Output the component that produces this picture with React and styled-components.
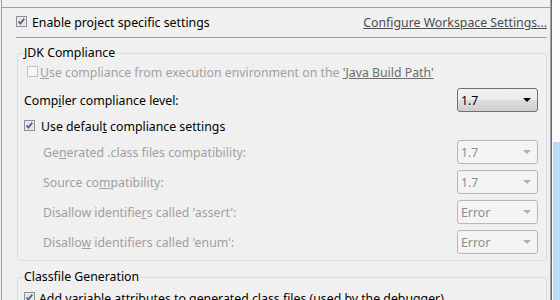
import styled, { createGlobalStyle } from "styled-components";

const GlobalStyle = createGlobalStyle`
  html, body {
    margin: 0;
    background: #f0f0f0;
  }
  body {
    font-family: "Noto Sans", "Open Sans", sans-serif;
    font-size: 12.3px;
    color: #000;
  }
`;

const Window = styled.div`
  display: flex;
  width: 560px;
  height: 300px;
  overflow: hidden;
`;

// plain block so nothing gets squeezed by the 300px height
const Pane = styled.div`
  box-sizing: border-box;
  width: 550px;
  flex: none;
  margin-left: 1px;
  border-left: 1px solid #a0a0a0;
  border-right: 1px solid #a0a0a0;
  overflow: hidden;
`;

const TopRule = styled.div`
  margin: 7px 0 0 -2px;
  height: 1px;
  background: #a0a0a0;
`;

const Header = styled.div`
  display: flex;
  align-items: center;
  justify-content: space-between;
  height: 29px;
  padding: 0 3px 0 14px;
`;

const Divider = styled.div`
  height: 1px;
  background: #a0a0a0;
  margin: 0 3px 0 14px;
`;

const Check = styled.label`
  display: flex;
  align-items: center;
  gap: ${({ gap }) => gap || 4}px;
  white-space: nowrap;
  color: ${({ disabled }) => (disabled ? "#a0a0a0" : "#000")};

  svg {
    flex: none;
    margin-top: -2px;
  }
`;

const Link = styled.a`
  color: ${({ disabled }) => (disabled ? "#6d6d6d" : "#4d4d4d")};
  text-decoration: underline;
  cursor: pointer;
`;

const Group = styled.fieldset`
  margin: ${({ top }) => top}px 3px 0 15px;
  padding: 0 8px 6px 0;
  border: 1px solid #d5dfe5;
  border-radius: 3px;
  min-width: 0;
`;

const Legend = styled.legend`
  margin-left: 5px;
  padding: 0 1px;
  line-height: 16px;
  color: #000;
`;

const Row = styled.div`
  display: flex;
  align-items: center;
  justify-content: space-between;
  height: ${({ h }) => h}px;
  margin-top: ${({ mt }) => mt || 0}px;
  padding-left: ${({ indent }) => indent}px;
`;

const Label = styled.span`
  white-space: nowrap;
  color: ${({ disabled }) => (disabled ? "#a0a0a0" : "#000")};
`;

const Combo = styled.div`
  box-sizing: border-box;
  width: 81px;
  height: 24px;
  flex: none;
  display: flex;
  align-items: center;
  justify-content: space-between;
  padding: 0 6px 0 3px;
  border-radius: 3px;
  border: 1px solid ${({ disabled }) => (disabled ? "#b8b8b8" : "#707070")};
  background: ${({ disabled }) =>
    disabled
      ? "#f4f4f4"
      : "linear-gradient(#f2f2f2 0%, #ebebeb 50%, #dddddd 50%, #cfcfcf 100%)"};
  color: ${({ disabled }) => (disabled ? "#8d8d8d" : "#000")};
`;

const Arrow = styled.span`
  width: 0;
  height: 0;
  border-left: 4px solid transparent;
  border-right: 4px solid transparent;
  border-top: 4px solid ${({ disabled }) => (disabled ? "#b0b0b0" : "#000")};
`;

const ScrollTrack = styled.div`
  flex: 1;
  display: flex;
  flex-direction: column;
  background: #fcfcfc;
  border-left: 1px solid #6a6a6a;
`;

const ScrollThumb = styled.div`
  margin: 142px 0 0 1px;
  flex: 1;
  background: #bcd9f5;
`;

const Box = ({ checked, disabled }) => (
  <svg width="11" height="11" viewBox="0 0 11 11">
    <rect
      x="0.5"
      y="0.5"
      width="10"
      height="10"
      fill={disabled ? "#f7f7f7" : "#f2f2f2"}
      stroke={disabled ? "#c4c4c4" : "#8e8f8f"}
    />
    {!disabled && <rect x="1.5" y="1.5" width="8" height="8" fill="#e4e4e4" />}
    {checked && (
      <path
        d="M2.5 5.5 L4.3 7.6 L8.3 2.6"
        stroke="#4a5f97"
        strokeWidth="1.7"
        fill="none"
      />
    )}
  </svg>
);

const settings = [
  { label: <>Ge<u>n</u>erated .class files compatibility:</>, value: "1.7" },
  { label: <>Source co<u>m</u>patibility:</>, value: "1.7" },
  { label: <>Disallow identifie<u>r</u>s called 'assert':</>, value: "Error" },
  { label: <>Disallo<u>w</u> identifiers called 'enum':</>, value: "Error" },
];

export default function App() {
  return (
    <>
      <GlobalStyle />
      <Window>
        <Pane>
          <TopRule />
          <Header>
            <Check gap={5}>
              <Box checked />
              <span>Enable pro<u>j</u>ect specific settings</span>
            </Check>
            <Link>Configure Workspace Settings...</Link>
          </Header>
          <Divider />

          <Group top={7}>
            <Legend>JDK Compliance</Legend>
            <Row h={22} indent={9}>
              <Check disabled gap={2}>
                <Box disabled />
                <span>
                  <u>U</u>se compliance from execution environment on the{" "}
                  <Link disabled>'Java Build Path'</Link>
                </span>
              </Check>
            </Row>
            <Row h={24} mt={5} indent={6}>
              <Label>Comp<u>i</u>ler compliance level:</Label>
              <Combo>
                1.7
                <Arrow />
              </Combo>
            </Row>
            <Row h={28} indent={6}>
              <Check gap={6}>
                <Box checked />
                <span>Use defaul<u>t</u> compliance settings</span>
              </Check>
            </Row>
            {settings.map((s, i) => (
              <Row key={i} h={24} mt={i ? 6 : 0} indent={25}>
                <Label disabled>{s.label}</Label>
                <Combo disabled>
                  {s.value}
                  <Arrow disabled />
                </Combo>
              </Row>
            ))}
          </Group>

          <Group top={8}>
            <Legend>Classfile Generation</Legend>
            <Row h={22} mt={2} indent={6}>
              <Check gap={4}>
                <Box checked />
                <span>
                  Add variable attributes to generated class files (used by the
                  debugger)
                </span>
              </Check>
            </Row>
          </Group>
        </Pane>
        <ScrollTrack>
          <ScrollThumb />
        </ScrollTrack>
      </Window>
    </>
  );
}
